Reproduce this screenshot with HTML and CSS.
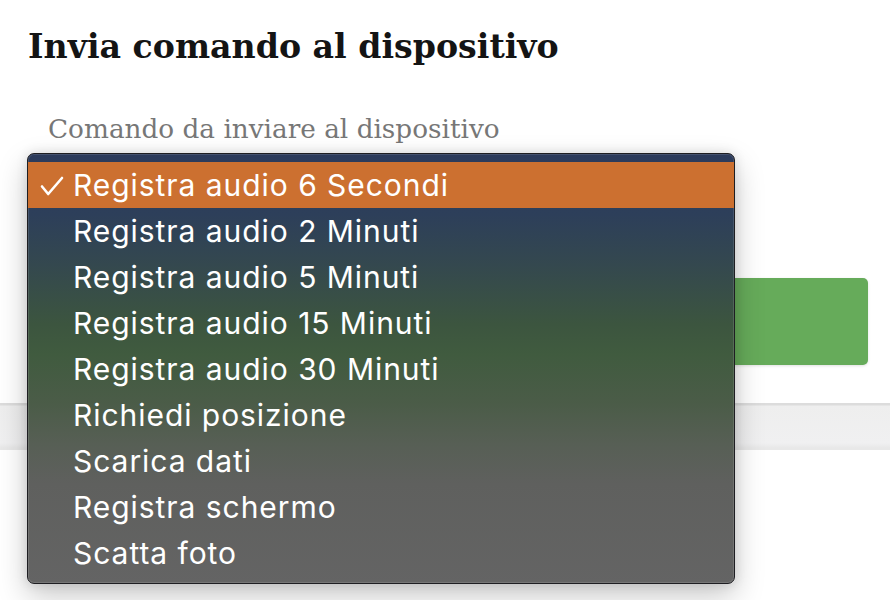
FILE: index.html
```html
<!DOCTYPE html>
<html lang="it">
<head>
<meta charset="utf-8">
<title>Invia comando al dispositivo</title>
<link rel="stylesheet" href="styles.css">
</head>
<body>
<div class="dialog">
  <h1 class="title">Invia comando al dispositivo</h1>
  <div class="field">
    <label class="field-label" for="cmd">Comando da inviare al dispositivo</label>
    <div class="select-box" id="cmd"></div>
  </div>
  <div class="actions">
    <button class="btn-send" type="button" aria-label="Invia"></button>
  </div>
</div>
<div class="footer-band"></div>
<div class="below"></div>

<ul class="menu">
  <li class="menu-item selected">
    <svg class="check" width="24" height="20" viewBox="0 0 24 20"><path d="M2 10.5 L8.2 18 L22 2" fill="none" stroke="#fff" stroke-width="2.6" stroke-linecap="round" stroke-linejoin="round"/></svg>
    Registra audio 6 Secondi</li>
  <li class="menu-item">Registra audio 2 Minuti</li>
  <li class="menu-item">Registra audio 5 Minuti</li>
  <li class="menu-item">Registra audio 15 Minuti</li>
  <li class="menu-item">Registra audio 30 Minuti</li>
  <li class="menu-item">Richiedi posizione</li>
  <li class="menu-item">Scarica dati</li>
  <li class="menu-item">Registra schermo</li>
  <li class="menu-item">Scatta foto</li>
</ul>
</body>
</html>
```
FILE: styles.css
```css
html, body {
  margin: 0;
  padding: 0;
  background: #ffffff;
  width: 890px;
  height: 600px;
  overflow: hidden;
}

.dialog {
  padding: 27px 22px 0 28px;
}

.title {
  margin: 0;
  font-family: "DejaVu Serif", Georgia, serif;
  font-weight: bold;
  font-size: 33.2px;
  line-height: 40px;
  color: #141414;
}

.field {
  padding-left: 20px;
  margin-top: 47px;
}

.field-label {
  display: block;
  font-family: "DejaVu Serif", Georgia, serif;
  font-size: 26.3px;
  line-height: 30px;
  color: #777777;
}

.select-box {
  margin-top: 14px;
  width: 660px;
  height: 44px;
  border: 1px solid #ccc;
  border-radius: 4px;
}

.actions {
  display: flex;
  justify-content: flex-end;
  margin-top: 74px;
}

.btn-send {
  width: 500px;
  height: 87px;
  border: none;
  border-radius: 5px;
  background: #66ab5a;
  box-shadow: 0 1px 3px rgba(0,0,0,0.12);
}

.footer-band {
  margin-top: 38px;
  height: 45px;
  background: linear-gradient(180deg, #dcdcdc 0, #dcdcdc 2px, #eeeeee 3px, #f0f0f1 40px, #e6e6e6 46px);
  border-bottom: 2px solid #e8e8e8;
}

.below {
  height: 150px;
}

.menu {
  position: absolute;
  left: 27px;
  top: 153px;
  width: 706px;
  margin: 0;
  padding: 8px 0 7px 0;
  list-style: none;
  border: 1px solid #1e1e22;
  border-radius: 7px;
  box-shadow: inset 0 0 0 1px rgba(255,255,255,0.12), 0 12px 30px rgba(0,0,0,0.22), 0 0 12px rgba(0,0,0,0.12);
  background:
    linear-gradient(180deg,
      #2b3a5b 0px,
      #2d3f5a 60px,
      #34484f 110px,
      #3c553f 170px,
      #405b3f 200px,
      #4b5c48 250px,
      #575f55 290px,
      #5f605e 330px,
      #646464 431px);
  font-family: "Inter", "Noto Sans", sans-serif;
  font-size: 30px;
  color: #ffffff;
}

.menu-item {
  position: relative;
  height: 46px;
  line-height: 46px;
  padding-left: 45px;
  letter-spacing: 0.95px;
  white-space: nowrap;
}

.menu-item.selected {
  background: #cc7030;
}

.check {
  position: absolute;
  left: 12px;
  top: 14px;
}
```
